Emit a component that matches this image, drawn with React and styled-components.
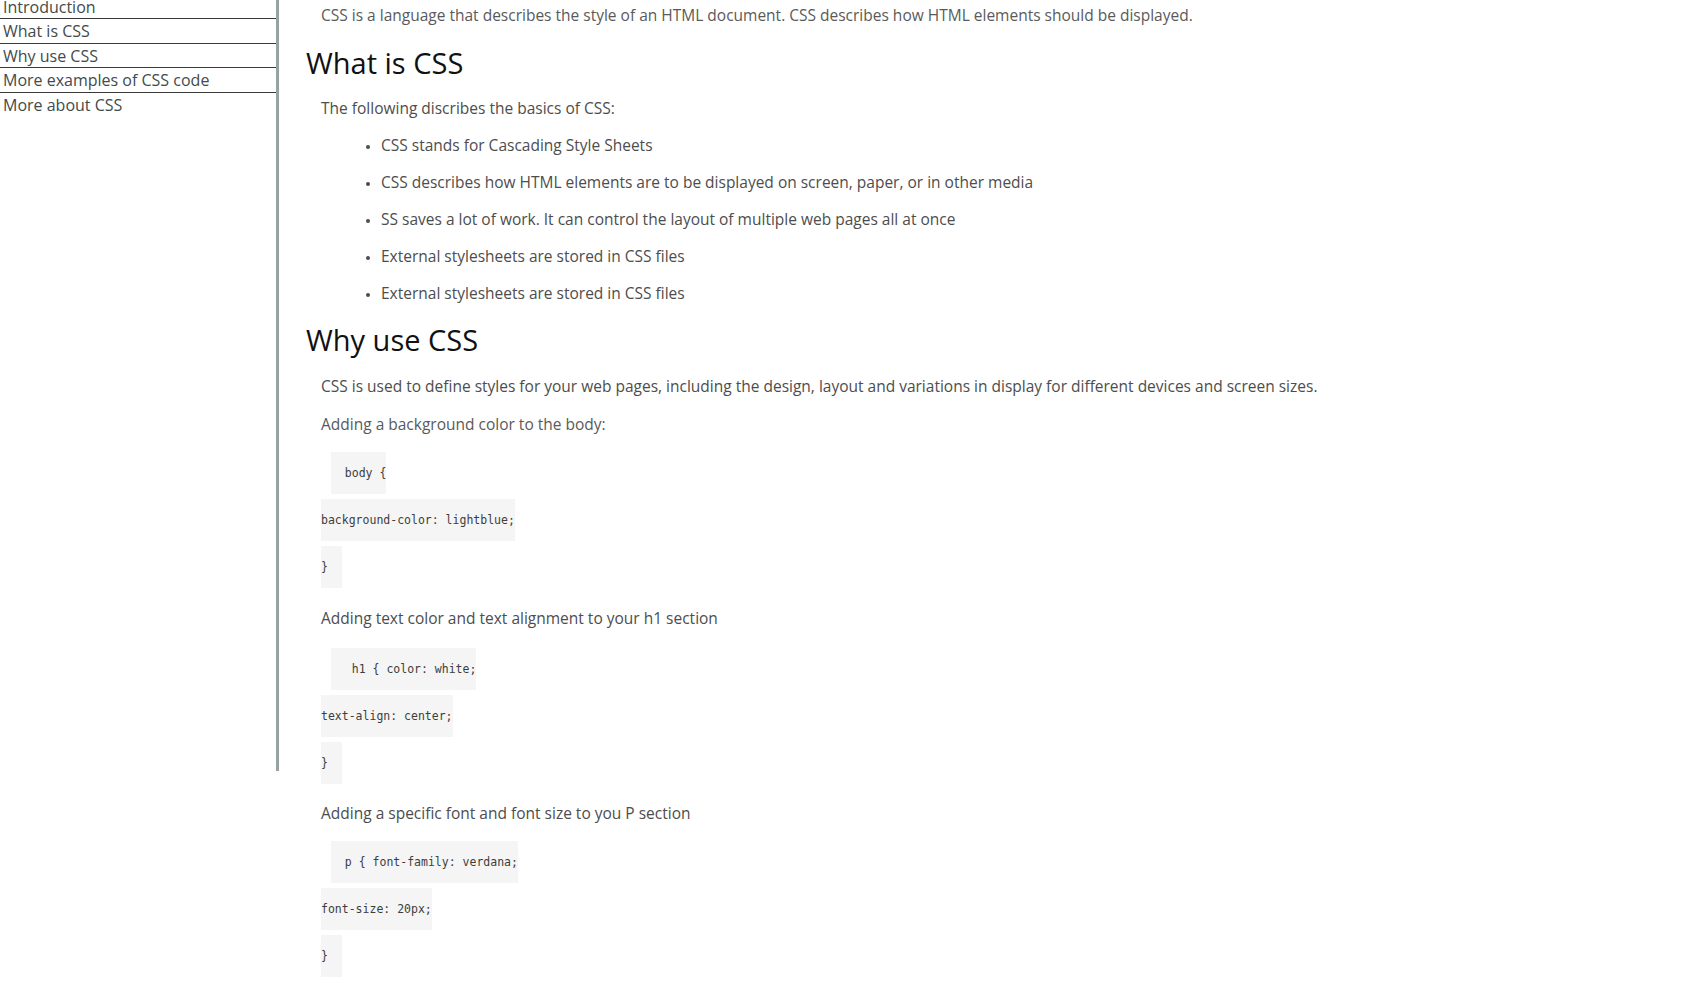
import React from 'react'
import styled, { createGlobalStyle } from 'styled-components'

const GlobalStyle = createGlobalStyle`
  html, body {
    margin: 0;
    padding: 0;
    background: #ffffff;
  }
  body {
    font-family: 'Open Sans', 'Noto Sans', sans-serif;
    overflow: hidden;
  }
`

const Page = styled.div`
  display: flex;
  align-items: flex-start;
  margin-top: -5px;
`

const Sidebar = styled.nav`
  width: 276px;
  height: 776px;
  flex-shrink: 0;
  border-right: 3px solid #98a2a2;
`

const NavList = styled.ul`
  list-style: none;
  margin: 0;
  padding: 0;
`

const NavItem = styled.li`
  font-size: 16px;
  line-height: 21.4px;
  padding: 2px 0 0 3px;
  color: #424b4b;
  border-bottom: ${props => (props.last ? 'none' : '1px solid #3a3a3a')};
`

const Main = styled.main`
  display: flex;
  flex-direction: column;
  align-items: flex-start;
  padding-left: 27px;
  color: #4d4d4d;
`

const Para = styled.p`
  margin: ${props => props.top}px 0 0 15px;
  font-size: 15.5px;
  line-height: 22px;
  color: ${props => (props.light ? '#5a5a5a' : '#4d4d4d')};
`

const Heading = styled.h2`
  margin: ${props => props.top}px 0 0 0;
  font-size: 29px;
  line-height: 40px;
  font-weight: 400;
  color: #111111;
`

const BulletList = styled.ul`
  display: flex;
  flex-direction: column;
  gap: 14.85px;
  margin: 14.8px 0 0 15px;
  padding-left: 60px;
  list-style: disc;
`

const Bullet = styled.li`
  font-size: 15.5px;
  line-height: 22px;
  color: #4d4d4d;

  &::marker {
    font-size: 12px;
  }
`

const CodeLine = styled.code`
  display: flex;
  align-items: center;
  height: 42px;
  margin: ${props => props.top}px 0 0 ${props => (props.indent ? 25 : 15)}px;
  background: #f5f5f5;
  font-family: 'DejaVu Sans Mono', 'Liberation Mono', monospace;
  font-size: 11.5px;
  white-space: pre;
  color: #3d3d3d;
`

const navItems = ['Introduction', 'What is CSS', 'Why use CSS', 'More examples of CSS code', 'More about CSS']

const bullets = [
  'CSS stands for Cascading Style Sheets',
  'CSS describes how HTML elements are to be displayed on screen, paper, or in other media',
  'SS saves a lot of work. It can control the layout of multiple web pages all at once',
  'External stylesheets are stored in CSS files',
  'External stylesheets are stored in CSS files',
]

function CodeBlock({ lines, top }) {
  return (
    <>
      <CodeLine indent top={top}>{lines[0]}</CodeLine>
      <CodeLine top={5}>{lines[1]}</CodeLine>
      <CodeLine top={5}>{lines[2]}</CodeLine>
    </>
  )
}

export default function App() {
  return (
    <>
      <GlobalStyle />
      <Page>
        <Sidebar>
          <NavList>
            {navItems.map((item, i) => (
              <NavItem key={item} last={i === navItems.length - 1}>{item}</NavItem>
            ))}
          </NavList>
        </Sidebar>
        <Main>
          <Para top={9} light>
            CSS is a language that describes the style of an HTML document. CSS describes how HTML elements should be displayed.
          </Para>
          <Heading top={17}>What is CSS</Heading>
          <Para top={14.4}>The following discribes the basics of CSS:</Para>
          <BulletList>
            {bullets.map((b, i) => (
              <Bullet key={i}>{b}</Bullet>
            ))}
          </BulletList>
          <Heading top={16.4}>Why use CSS</Heading>
          <Para top={14.8}>
            CSS is used to define styles for your web pages, including the design, layout and variations in display for different devices and screen sizes.
          </Para>
          <Para top={15.9} light>Adding a background color to the body:</Para>
          <CodeBlock top={17} lines={['  body {', 'background-color: lightblue;', '}  ']} />
          <Para top={19.7}>Adding text color and text alignment to your h1 section</Para>
          <CodeBlock top={18.3} lines={['   h1 { color: white;', 'text-align: center;', '}  ']} />
          <Para top={18.6}>Adding a specific font and font size to you P section</Para>
          <CodeBlock top={17} lines={['  p { font-family: verdana;', 'font-size: 20px;', '}  ']} />
        </Main>
      </Page>
    </>
  )
}
